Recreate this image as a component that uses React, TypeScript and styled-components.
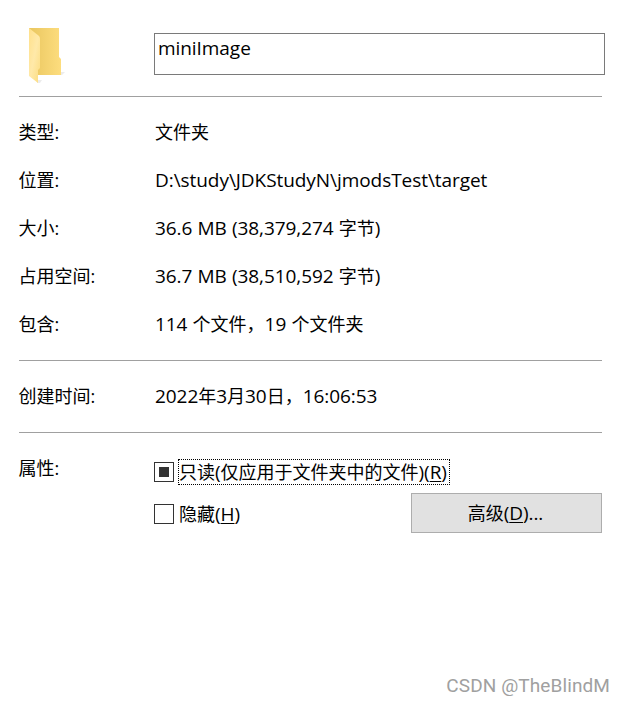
import React from "react";
import styled, { createGlobalStyle } from "styled-components";

const GlobalStyle = createGlobalStyle`
  * { box-sizing: border-box; }
  body {
    margin: 0;
    background: #fff;
    color: #000;
    font: 18px/24px "Open Sans", "Noto Sans CJK SC", sans-serif;
  }
`;

const Sheet = styled.main`
  width: 624px;
  height: 702px;
  padding: 28px 19px 0;
  display: flex;
  flex-direction: column;
  overflow: hidden;
  white-space: nowrap;
`;

const Header = styled.header`
  display: grid;
  grid-template-columns: 135px 451px;
  height: 68px;
`;

const FolderIcon = styled.svg`
  width: 50px;
  height: 60px;
`;

const NameInput = styled.div`
  margin-top: 5px;
  height: 42px;
  border: 1px solid #7a7a7a;
  padding: 2px 3px;
`;

const Divider = styled.hr`
  width: 583px;
  height: 1px;
  margin: 0;
  border: 0;
  flex: none;
  background: #a0a0a0;
`;

const Section = styled.section`
  padding: 11px 0 12px;
`;

const Row = styled.div`
  display: grid;
  grid-template-columns: 136px auto;
  align-items: center;
  height: 48px;
`;

const Label = styled.span`
  margin-left: -0.6px;
`;

const Latin = styled.span`
  font-size: 19px;
  line-height: 20px;
  letter-spacing: -0.06px;
  word-spacing: 0.3px;
`;

const Attributes = styled.section`
  display: grid;
  grid-template-columns: 135px 1fr;
  padding-top: 23px;
`;

const Options = styled.div`
  display: flex;
  flex-direction: column;
  width: 448px;
  padding-top: 3px;
`;

const OptionLine = styled.div`
  display: flex;
  align-items: center;
  height: 26px;
`;

const BottomLine = styled(OptionLine)`
  height: 40px;
  margin-top: 8px;
  justify-content: space-between;
`;

const HiddenOption = styled(OptionLine)`
  margin-top: 2px;
`;

const Box = styled.span`
  width: 20px;
  height: 20px;
  border: 1px solid #333;
  display: grid;
  place-items: center;
  flex: none;
`;

const Mark = styled.span`
  width: 10px;
  height: 10px;
  background: #333;
`;

const OptionLabel = styled.span<{ $focused?: boolean }>`
  height: 26px;
  margin-left: 4px;
  line-height: 24px;
  width: ${(p) => (p.$focused ? "272px" : "auto")};
  border: 1px ${(p) => (p.$focused ? "dotted #000" : "solid transparent")};
`;

const Key = styled.span`
  text-decoration: underline;
  text-decoration-thickness: 1px;
  text-underline-offset: 2px;
`;

const Button = styled.button`
  width: 191px;
  height: 40px;
  padding: 0 2px 0 0;
  border: 1px solid #adadad;
  background: #e1e1e1;
  color: #000;
  font: inherit;
`;

const Watermark = styled.footer`
  margin-top: auto;
  margin-right: -5px;
  padding-bottom: 4px;
  align-self: flex-end;
  font: 19px/24px Roboto, "Liberation Sans", sans-serif;
  letter-spacing: 0.1px;
  color: #a0a0a0;
`;

const details = [
  { label: "类型:", value: "文件夹" },
  { label: "位置:", value: "D:\\study\\JDKStudyN\\jmodsTest\\target" },
  { label: "大小:", value: "36.6 MB (38,379,274 字节)" },
  { label: "占用空间:", value: "36.7 MB (38,510,592 字节)" },
  { label: "包含:", value: "114 个文件，19 个文件夹" },
];

/* Latin runs are set slightly larger than the Chinese text around them. */
function Value({ text }: { text: string }) {
  return (
    <span>
      {text
        .split(/([\x20-\x7e]+)/)
        .map((run, i) => (i % 2 ? <Latin key={i}>{run}</Latin> : run))}
    </span>
  );
}

export default function App() {
  return (
    <>
      <GlobalStyle />
      <Sheet>
        <Header>
          <FolderIcon viewBox="0 0 50 60">
            <defs>
              <linearGradient id="back" x1="0" y1="0" x2="1" y2="0">
                <stop offset="0" stopColor="#e9c65f" />
                <stop offset="1" stopColor="#fddd7e" />
              </linearGradient>
              <linearGradient id="front" x1="0" y1="0" x2="1" y2="1">
                <stop offset="0" stopColor="#ffe08a" />
                <stop offset="0.5" stopColor="#ffe9a9" />
                <stop offset="1" stopColor="#fbdc80" />
              </linearGradient>
            </defs>
            <path d="M41 44h5l-3 3h-2zM18 52h5l-2 3h-3z" fill="#ececec" />
            <path d="M10 0h30v29l2 2v16H10z" fill="url(#back)" />
            <path d="M10 0l10 8q1 1 1 3v29l-2 2v13l-9-7z" fill="url(#front)" />
          </FolderIcon>
          <NameInput>
            <Value text="miniImage" />
          </NameInput>
        </Header>
        <Divider />
        <Section>
          {details.map((d) => (
            <Row key={d.label}>
              <Label>{d.label}</Label>
              <Value text={d.value} />
            </Row>
          ))}
        </Section>
        <Divider />
        <Section>
          <Row>
            <Label>创建时间:</Label>
            <Value text="2022年3月30日，16:06:53" />
          </Row>
        </Section>
        <Divider />
        <Attributes>
          <Label>属性:</Label>
          <Options>
            <OptionLine>
              <Box><Mark /></Box>
              <OptionLabel $focused>
                只读<Latin>(</Latin>仅应用于文件夹中的文件<Latin>)(<Key>R</Key>)</Latin>
              </OptionLabel>
            </OptionLine>
            <BottomLine>
              <HiddenOption>
                <Box />
                <OptionLabel>隐藏<Latin>(<Key>H</Key>)</Latin></OptionLabel>
              </HiddenOption>
              <Button>高级<Latin>(<Key>D</Key>)...</Latin></Button>
            </BottomLine>
          </Options>
        </Attributes>
        <Watermark>CSDN @TheBlindM</Watermark>
      </Sheet>
    </>
  );
}
